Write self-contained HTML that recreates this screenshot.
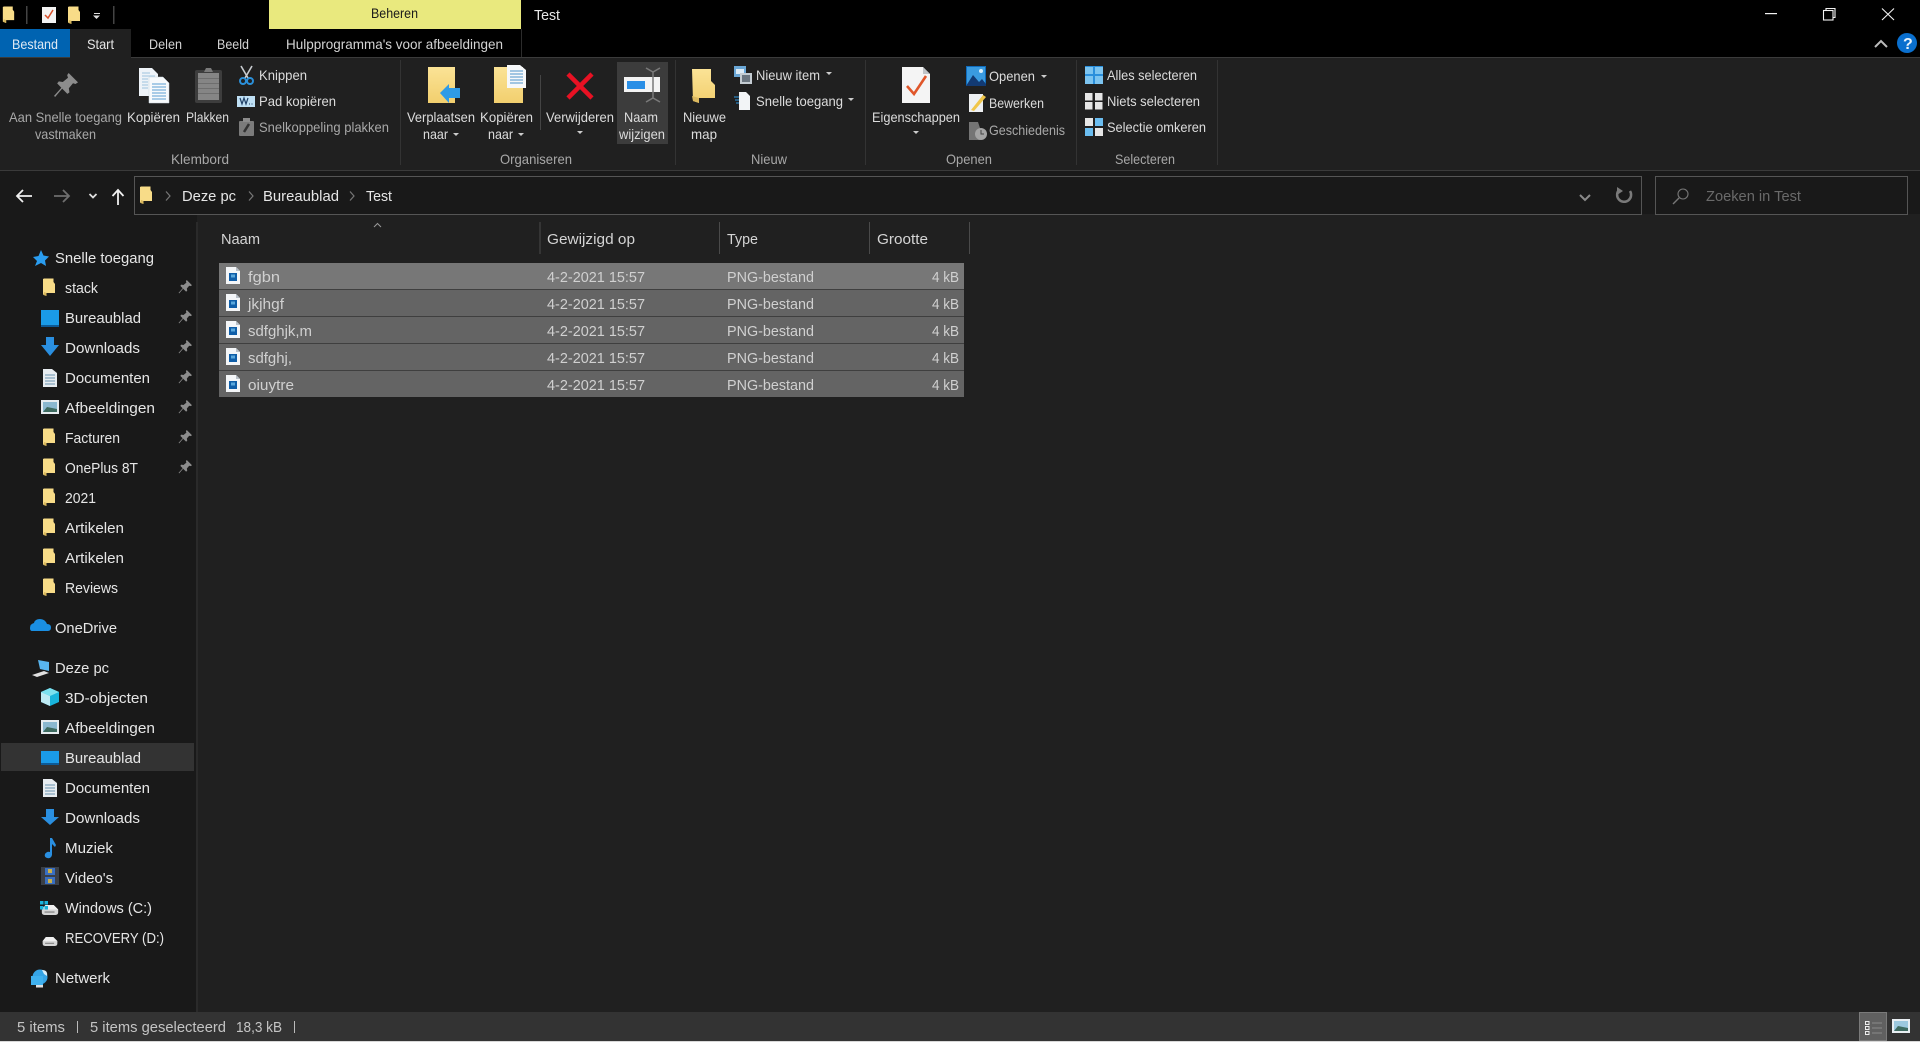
<!DOCTYPE html>
<html><head><meta charset="utf-8"><title>Test</title>
<style>
html,body{margin:0;padding:0;background:#191919;overflow:hidden}
svg{display:block}
text{font-family:"Liberation Sans",sans-serif;font-size:14.5px;fill:#d4d4d4}
.r text{fill:#dcdcdc}
.g text{fill:#a8a8a8}
.s text{fill:#e6e6e6}
.row text{fill:#d0d0d0}
</style></head><body>
<svg width="1920" height="1042" viewBox="0 0 1920 1042" xmlns="http://www.w3.org/2000/svg">
<defs>
<linearGradient id="fy" x1="0" y1="0" x2="0" y2="1"><stop offset="0" stop-color="#fbe396"/><stop offset="1" stop-color="#f2cf6e"/></linearGradient>
<linearGradient id="bl" x1="0" y1="0" x2="1" y2="1"><stop offset="0" stop-color="#45b4f5"/><stop offset="1" stop-color="#0f7fd6"/></linearGradient>
<symbol id="fo" viewBox="0 0 12 18"><path d="M1 .5H10.500V4L12 6V15H3.500V18L0 16.500V1Z" fill="#f8dc88"/><path d="M3.500 15V18L.5 17L1 14Z" fill="#d9b75c"/></symbol>
<symbol id="pin" viewBox="0 0 12 12"><path d="M7.500 0L12 4.500L10.800 5.300L9.600 4.900L7.600 7.300L7.900 9.300L6.900 10L4.400 7.500L1 11.500L.5 11L4 7.100L2 5L2.800 4L4.700 4.300L7.200 2.300L6.800 1Z" fill="#8c8c8c"/></symbol>
<symbol id="pic" viewBox="0 0 14 17"><path d="M0 0H10L14 4V17H0Z" fill="#f4f6f8"/><path d="M10 0V4H14Z" fill="#b8c0c8"/><rect x="3" y="6" width="8" height="8" fill="#0f5ea8"/><rect x="5" y="7.500" width="4" height="3" fill="#5aa8dc"/></symbol>
<symbol id="hd" viewBox="0 0 18 11"><path d="M4 0H13L18 5V8Q18 11 15 11H3Q0 11 0 8V5Z" fill="#d6d6d6"/><path d="M4 0H13L18 5H0Z" fill="#f0f0f0"/><rect x="3" y="7" width="11" height="1.500" fill="#8a8a8a"/></symbol>
</defs>

<!-- backgrounds -->
<rect width="1920" height="1042" fill="#191919"/>
<rect width="1920" height="57" fill="#000"/>
<rect y="57" width="1920" height="114" fill="#202020"/>
<rect y="57" width="1920" height="1" fill="#3b3b3b"/>
<rect y="170" width="1920" height="1" fill="#3a3a3a"/>
<rect x="197" y="214" width="1723" height="798" fill="#202020"/>
<rect x="196" y="222" width="2" height="790" fill="#2a2a2a"/>
<rect y="1012" width="1920" height="29" fill="#333"/>
<rect y="1041" width="1920" height="1" fill="#d8d8d8"/>

<!-- title bar -->
<rect x="269" width="252" height="29" fill="#e9e97e"/>
<rect x="0" y="29" width="70" height="28" fill="#0063b1"/>
<rect x="70" y="29" width="61" height="30" fill="#202020"/>
<rect x="521" y="29" width="1" height="28" fill="#2c2c2c"/>
<text x="371" y="18" textLength="47" lengthAdjust="spacingAndGlyphs" style="fill:#1a1a1a;font-size:13.500px">Beheren</text>
<text x="534" y="20" textLength="26" lengthAdjust="spacingAndGlyphs" style="fill:#e8e8e8">Test</text>
<g>
<text x="12" y="49" textLength="46" lengthAdjust="spacingAndGlyphs" style="fill:#dfe9f3;font-size:14px">Bestand</text>
<text x="87" y="49" textLength="27" lengthAdjust="spacingAndGlyphs" style="fill:#e6e6e6;font-size:14px">Start</text>
<text x="149" y="49" textLength="33" lengthAdjust="spacingAndGlyphs" style="font-size:14px">Delen</text>
<text x="217" y="49" textLength="32" lengthAdjust="spacingAndGlyphs" style="font-size:14px">Beeld</text>
<text x="286" y="49" textLength="217" lengthAdjust="spacingAndGlyphs" style="font-size:14px">Hulpprogramma's voor afbeeldingen</text>
</g>
<!-- quick access -->
<use href="#fo" x="2" y="6" width="13" height="17"/>
<rect x="26" y="6" width="1.500" height="18" fill="#444"/>
<rect x="42" y="7" width="14" height="16" fill="#f3f3f3"/>
<path d="M45 15L48 18L53 10" fill="none" stroke="#d8502a" stroke-width="1.500"/>
<use href="#fo" x="68" y="6" width="12" height="18"/>
<rect x="94" y="13" width="6" height="1" fill="#ddd"/>
<path d="M93 15.500H100L96.500 19Z" fill="#ddd"/>
<rect x="113" y="6" width="1.500" height="18" fill="#444"/>
<!-- window controls -->
<rect x="1765" y="13" width="12" height="1.200" fill="#f2f2f2"/>
<g fill="none" stroke="#f2f2f2" stroke-width="1.100"><rect x="1823.500" y="10.500" width="9.500" height="9.500"/><path d="M1826 10V8.500H1835V17.500H1833"/><path d="M1882 8.500L1894 20M1894 8.500L1882 20"/></g>
<path d="M1875 47L1881 41L1887 47" fill="none" stroke="#bbb" stroke-width="2"/>
<circle cx="1907" cy="43" r="10" fill="#0a6fce"/>
<text x="1903" y="49" style="font-size:16px;font-weight:bold;fill:#e8f2fb">?</text>

<!-- ribbon highlight + separators -->
<rect x="617" y="62" width="51" height="82" fill="#3c3c3c"/>
<g fill="#333"><rect x="400" y="60" width="1" height="105"/><rect x="675" y="60" width="1" height="105"/><rect x="865" y="60" width="1" height="105"/><rect x="1076" y="60" width="1" height="105"/><rect x="1217" y="60" width="1" height="105"/></g>
<rect x="540" y="75" width="1" height="55" fill="#444"/>

<!-- ribbon text -->
<g class="g">
<text x="9" y="122" textLength="113" lengthAdjust="spacingAndGlyphs" style="font-size:14px">Aan Snelle toegang</text>
<text x="35" y="139" textLength="61" lengthAdjust="spacingAndGlyphs" style="font-size:14px">vastmaken</text>
<text x="259" y="132" textLength="130" lengthAdjust="spacingAndGlyphs" style="font-size:14px">Snelkoppeling plakken</text>
<text x="989" y="135" textLength="76" lengthAdjust="spacingAndGlyphs" style="font-size:14px">Geschiedenis</text>
<text x="171" y="164" textLength="58" lengthAdjust="spacingAndGlyphs" style="font-size:14px">Klembord</text>
<text x="500" y="164" textLength="72" lengthAdjust="spacingAndGlyphs" style="font-size:14px">Organiseren</text>
<text x="751" y="164" textLength="36" lengthAdjust="spacingAndGlyphs" style="font-size:14px">Nieuw</text>
<text x="946" y="164" textLength="46" lengthAdjust="spacingAndGlyphs" style="font-size:14px">Openen</text>
<text x="1115" y="164" textLength="60" lengthAdjust="spacingAndGlyphs" style="font-size:14px">Selecteren</text>
</g>
<g class="r">
<text x="127" y="122" textLength="53" lengthAdjust="spacingAndGlyphs" style="font-size:14px">Kopiëren</text>
<text x="186" y="122" textLength="43" lengthAdjust="spacingAndGlyphs" style="font-size:14px">Plakken</text>
<text x="259" y="80" textLength="48" lengthAdjust="spacingAndGlyphs" style="font-size:14px">Knippen</text>
<text x="259" y="106" textLength="77" lengthAdjust="spacingAndGlyphs" style="font-size:14px">Pad kopiëren</text>
<text x="407" y="122" textLength="68" lengthAdjust="spacingAndGlyphs" style="font-size:14px">Verplaatsen</text>
<text x="423" y="139" textLength="25" lengthAdjust="spacingAndGlyphs" style="font-size:14px">naar</text>
<text x="480" y="122" textLength="53" lengthAdjust="spacingAndGlyphs" style="font-size:14px">Kopiëren</text>
<text x="488" y="139" textLength="25" lengthAdjust="spacingAndGlyphs" style="font-size:14px">naar</text>
<text x="546" y="122" textLength="68" lengthAdjust="spacingAndGlyphs" style="font-size:14px">Verwijderen</text>
<text x="624" y="122" textLength="34" lengthAdjust="spacingAndGlyphs" style="font-size:14px">Naam</text>
<text x="619" y="139" textLength="46" lengthAdjust="spacingAndGlyphs" style="font-size:14px">wijzigen</text>
<text x="683" y="122" textLength="43" lengthAdjust="spacingAndGlyphs" style="font-size:14px">Nieuwe</text>
<text x="691" y="139" textLength="26" lengthAdjust="spacingAndGlyphs" style="font-size:14px">map</text>
<text x="756" y="80" textLength="64" lengthAdjust="spacingAndGlyphs" style="font-size:14px">Nieuw item</text>
<text x="756" y="106" textLength="87" lengthAdjust="spacingAndGlyphs" style="font-size:14px">Snelle toegang</text>
<text x="872" y="122" textLength="88" lengthAdjust="spacingAndGlyphs" style="font-size:14px">Eigenschappen</text>
<text x="989" y="81" textLength="46" lengthAdjust="spacingAndGlyphs" style="font-size:14px">Openen</text>
<text x="989" y="108" textLength="55" lengthAdjust="spacingAndGlyphs" style="font-size:14px">Bewerken</text>
<text x="1107" y="80" textLength="90" lengthAdjust="spacingAndGlyphs" style="font-size:14px">Alles selecteren</text>
<text x="1107" y="106" textLength="93" lengthAdjust="spacingAndGlyphs" style="font-size:14px">Niets selecteren</text>
<text x="1107" y="132" textLength="99" lengthAdjust="spacingAndGlyphs" style="font-size:14px">Selectie omkeren</text>
</g>
<!-- dropdown carets -->
<g fill="#ccc">
<path d="M453 133H459L456 136Z"/><path d="M518 133H524L521 136Z"/><path d="M577 131H583L580 134Z"/>
<path d="M826 72H832L829 75Z"/><path d="M848 98H854L851 101Z"/><path d="M913 131H919L916 134Z"/><path d="M1041 75H1047L1044 78Z"/>
</g>

<!-- ribbon icons -->
<!-- pin -->
<use href="#pin" x="53" y="73" width="25" height="25"/>
<!-- copy docs -->
<path d="M139 68H152L158 74V96H139Z" fill="#eef3f8"/>
<g stroke="#9fc3de" stroke-width="1"><path d="M142 73H150M142 76H155M142 79H148M142 82H148M142 85H148M142 88H148"/></g>
<path d="M149 77H163L169 83V103H149Z" fill="#f7fafc" stroke="#c8d4dd" stroke-width=".5"/>
<g stroke="#5b9fd2" stroke-width="1"><path d="M152 84H166M152 87H166M152 90H166M152 93H166M152 96H166M152 99H166"/></g>
<!-- clipboard -->
<rect x="195" y="70" width="27" height="33" rx="2" fill="#3d3d3d"/>
<rect x="198" y="73" width="21" height="27" fill="#858585"/>
<g stroke="#6e6e6e"><path d="M198 78.500H219M198 83.500H219M198 88.500H219M198 93.500H219"/></g>
<path d="M204 72L206 68H211L213 72Z" fill="#7a7a7a"/>
<!-- scissors -->
<path d="M241 66L248 78M252 66L245 78" stroke="#c8ccd0" stroke-width="1.600" fill="none"/>
<g fill="none" stroke="#2b8fd8" stroke-width="2"><circle cx="243" cy="81" r="3"/><circle cx="250" cy="81" r="3"/></g>
<!-- path copy -->
<rect x="237" y="96" width="18" height="11" fill="#bfe0f5"/>
<g stroke="#1f3f66" stroke-width="1.200" fill="none"><path d="M240 98L242 104L244 98L246 104L248 98"/></g>
<path d="M249 104h1m1.500 0h1" stroke="#1f3f66"/>
<!-- paste shortcut -->
<rect x="239" y="121" width="15" height="15" rx="1" fill="#7b7b7b"/>
<rect x="243" y="118" width="7" height="4" fill="#8c8c8c"/>
<path d="M244 132L249 124" stroke="#333" stroke-width="2.500"/>
<!-- move folder -->
<path d="M428 67H455V103H428Z" fill="url(#fy)"/>
<path d="M449 84L440 93L449 103V98H460V88H449Z" fill="#2e9be6"/>
<!-- copy folder -->
<path d="M494 67H523V103H494Z" fill="url(#fy)"/>
<path d="M507 65H520L526 70V88H507Z" fill="#f6f8fa"/>
<g stroke="#4f93c9"><path d="M510 71H523M510 74H523M510 77H523M510 80H523M510 83H523"/></g>
<!-- delete X -->
<path d="M568 74L592 98M592 74L568 98" stroke="#e81123" stroke-width="4.500" fill="none"/>
<!-- rename -->
<rect x="624" y="77" width="36" height="15" fill="#f4f4f4"/>
<rect x="627" y="81" width="18" height="8" fill="#2a8fe6"/>
<path d="M646 68L653 72L660 68M653 72V98M646 102L653 98L660 102" stroke="#7a7a7a" stroke-width="1.500" fill="none"/>
<!-- new folder -->
<path d="M692 69H711V81L715 85V98H699V103L693 101Z" fill="url(#fy)"/>
<path d="M699 98V103L693 101L692 96Z" fill="#dcb95f"/>
<!-- new item -->
<rect x="734" y="66" width="12" height="11" fill="#6aa7d6"/><rect x="736" y="69" width="8" height="5" fill="#dcebf6"/>
<rect x="740" y="73" width="12" height="11" fill="#c4ccd2"/><rect x="742" y="75" width="8" height="7" fill="#6b7680"/>
<!-- easy access -->
<path d="M739 92H746L750 96V110H739Z" fill="#f2f4f6"/>
<path d="M734 97H739M735 100H739M736 103H739" stroke="#2e9be6"/>
<!-- properties -->
<path d="M902 67H923L930 74V103H902Z" fill="#f4f4f4"/><path d="M923 67V74H930Z" fill="#bfc4c8"/>
<path d="M907 86L914 94L926 76" fill="none" stroke="#e0562a" stroke-width="2.600"/>
<!-- open photo -->
<rect x="966" y="66" width="20" height="20" fill="#0f6cbd"/>
<rect x="967" y="67" width="18" height="18" fill="#3a9be0"/>
<path d="M966 86L973 75L979 82L982 79L986 84V86Z" fill="#123a73"/><circle cx="981" cy="71" r="2" fill="#d8eefb"/>
<!-- edit -->
<rect x="969" y="94" width="14" height="18" fill="#eef0f2"/>
<path d="M971 110L983 95L986 97L974 111Z" fill="#f0c64a"/>
<!-- history -->
<path d="M969 122H978L980 128V140H969Z" fill="#757575"/>
<circle cx="981" cy="134" r="6" fill="#a4a4a4"/><path d="M981 130V134H984" stroke="#444" fill="none"/>
<!-- select all -->
<g fill="#7cc4f0"><rect x="1085" y="66" width="8" height="8"/><rect x="1095" y="66" width="8" height="8"/><rect x="1085" y="76" width="8" height="8"/><rect x="1095" y="76" width="8" height="8"/></g>
<g fill="#2a8fdc"><path d="M1085 66h18v1h-18zM1085 74h18v2h-18zM1093 66h2v18h-2z"/></g>
<g fill="#e6e6e6"><rect x="1085" y="93" width="7.500" height="7.500"/><rect x="1095" y="93" width="7.500" height="7.500"/><rect x="1085" y="102" width="7.500" height="7.500"/><rect x="1095" y="102" width="7.500" height="7.500"/></g>
<rect x="1085" y="118" width="8" height="8" fill="#e6e6e6"/><rect x="1095" y="118" width="8" height="8" fill="#6bbdf0"/><rect x="1085" y="128" width="8" height="8" fill="#6bbdf0"/><rect x="1095" y="128" width="8" height="8" fill="#e6e6e6"/>

<!-- address row -->
<rect x="134.500" y="176.500" width="1507" height="38" fill="#191919" stroke="#555"/>
<rect x="1655.500" y="176.500" width="252" height="38" fill="#191919" stroke="#555"/>
<g fill="none" stroke-width="1.800">
<path d="M32 196H17M23 190L17 196L23 202" stroke="#f0f0f0"/>
<path d="M54 196H69M63 190L69 196L63 202" stroke="#6e6e6e"/>
<path d="M89.500 194L93 197.500L96.500 194" stroke="#e0e0e0"/>
<path d="M118 205V191M112.500 196L118 190L123.500 196" stroke="#f0f0f0"/>
<path d="M166 191.500L170 196L166 200.500" stroke="#777" stroke-width="1.200"/>
<path d="M249 191.500L253 196L249 200.500" stroke="#777" stroke-width="1.200"/>
<path d="M350 191.500L354 196L350 200.500" stroke="#777" stroke-width="1.200"/>
<path d="M1580 195L1585 200L1590 195" stroke="#8a8a8a" stroke-width="2"/>
<path d="M1619 190A7 7 0 1 0 1630 191" stroke="#7a7a7a" stroke-width="2.500"/>
</g>
<path d="M1617 187L1623 191L1617 195Z" fill="#7a7a7a"/>
<use href="#fo" x="140" y="186" width="12" height="18"/>
<g class="s">
<text x="182" y="201" textLength="54" lengthAdjust="spacingAndGlyphs">Deze pc</text>
<text x="263" y="201" textLength="76" lengthAdjust="spacingAndGlyphs">Bureaublad</text>
<text x="366" y="201" textLength="26" lengthAdjust="spacingAndGlyphs">Test</text>
</g>
<circle cx="1683" cy="194" r="5" fill="none" stroke="#777" stroke-width="1.100"/><path d="M1679 198L1673 204" stroke="#777" stroke-width="1.400"/>
<text x="1706" y="201" textLength="95" lengthAdjust="spacingAndGlyphs" style="fill:#6a6a6a">Zoeken in Test</text>

<!-- column headers -->
<path d="M374 227L377.500 223.500L381 227" fill="none" stroke="#999"/>
<g fill="#4a4a4a"><rect x="539.500" y="222" width="1" height="32"/><rect x="719" y="222" width="1" height="32"/><rect x="869" y="222" width="1" height="32"/><rect x="969" y="222" width="1" height="32"/></g>
<g>
<text x="221" y="244" textLength="39" lengthAdjust="spacingAndGlyphs">Naam</text>
<text x="547" y="244" textLength="88" lengthAdjust="spacingAndGlyphs">Gewijzigd op</text>
<text x="727" y="244" textLength="31" lengthAdjust="spacingAndGlyphs">Type</text>
<text x="877" y="244" textLength="51" lengthAdjust="spacingAndGlyphs">Grootte</text>
</g>

<!-- rows -->
<rect x="219" y="263" width="745" height="26" fill="#777"/>
<rect x="219" y="290" width="745" height="26" fill="#646464"/>
<rect x="219" y="317" width="745" height="26" fill="#646464"/>
<rect x="219" y="344" width="745" height="26" fill="#646464"/>
<rect x="219" y="371" width="745" height="26" fill="#646464"/>
<g fill="#3f3f3f"><rect x="219" y="289" width="745" height="1"/><rect x="219" y="316" width="745" height="1"/><rect x="219" y="343" width="745" height="1"/><rect x="219" y="370" width="745" height="1"/></g>
<use href="#pic" x="226" y="267" width="14" height="17"/>
<use href="#pic" x="226" y="294" width="14" height="17"/>
<use href="#pic" x="226" y="321" width="14" height="17"/>
<use href="#pic" x="226" y="348" width="14" height="17"/>
<use href="#pic" x="226" y="375" width="14" height="17"/>
<g class="row">
<text x="248" y="282" textLength="32" lengthAdjust="spacingAndGlyphs">fgbn</text>
<text x="547" y="282" textLength="98" lengthAdjust="spacingAndGlyphs">4-2-2021 15:57</text>
<text x="727" y="282" textLength="87" lengthAdjust="spacingAndGlyphs">PNG-bestand</text>
<text x="932" y="282" textLength="27" lengthAdjust="spacingAndGlyphs">4 kB</text>
<text x="248" y="309" textLength="36" lengthAdjust="spacingAndGlyphs">jkjhgf</text>
<text x="547" y="309" textLength="98" lengthAdjust="spacingAndGlyphs">4-2-2021 15:57</text>
<text x="727" y="309" textLength="87" lengthAdjust="spacingAndGlyphs">PNG-bestand</text>
<text x="932" y="309" textLength="27" lengthAdjust="spacingAndGlyphs">4 kB</text>
<text x="248" y="336" textLength="64" lengthAdjust="spacingAndGlyphs">sdfghjk,m</text>
<text x="547" y="336" textLength="98" lengthAdjust="spacingAndGlyphs">4-2-2021 15:57</text>
<text x="727" y="336" textLength="87" lengthAdjust="spacingAndGlyphs">PNG-bestand</text>
<text x="932" y="336" textLength="27" lengthAdjust="spacingAndGlyphs">4 kB</text>
<text x="248" y="363" textLength="44" lengthAdjust="spacingAndGlyphs">sdfghj,</text>
<text x="547" y="363" textLength="98" lengthAdjust="spacingAndGlyphs">4-2-2021 15:57</text>
<text x="727" y="363" textLength="87" lengthAdjust="spacingAndGlyphs">PNG-bestand</text>
<text x="932" y="363" textLength="27" lengthAdjust="spacingAndGlyphs">4 kB</text>
<text x="248" y="390" textLength="46" lengthAdjust="spacingAndGlyphs">oiuytre</text>
<text x="547" y="390" textLength="98" lengthAdjust="spacingAndGlyphs">4-2-2021 15:57</text>
<text x="727" y="390" textLength="87" lengthAdjust="spacingAndGlyphs">PNG-bestand</text>
<text x="932" y="390" textLength="27" lengthAdjust="spacingAndGlyphs">4 kB</text>
</g>

<!-- sidebar -->
<rect x="1" y="743" width="193" height="28" fill="#333"/>
<g class="s">
<text x="55" y="263" textLength="99" lengthAdjust="spacingAndGlyphs">Snelle toegang</text>
<text x="65" y="293" textLength="33" lengthAdjust="spacingAndGlyphs">stack</text>
<text x="65" y="323" textLength="76" lengthAdjust="spacingAndGlyphs">Bureaublad</text>
<text x="65" y="353" textLength="75" lengthAdjust="spacingAndGlyphs">Downloads</text>
<text x="65" y="383" textLength="85" lengthAdjust="spacingAndGlyphs">Documenten</text>
<text x="65" y="413" textLength="90" lengthAdjust="spacingAndGlyphs">Afbeeldingen</text>
<text x="65" y="443" textLength="55" lengthAdjust="spacingAndGlyphs">Facturen</text>
<text x="65" y="473" textLength="73" lengthAdjust="spacingAndGlyphs">OnePlus 8T</text>
<text x="65" y="503" textLength="31" lengthAdjust="spacingAndGlyphs">2021</text>
<text x="65" y="533" textLength="59" lengthAdjust="spacingAndGlyphs">Artikelen</text>
<text x="65" y="563" textLength="59" lengthAdjust="spacingAndGlyphs">Artikelen</text>
<text x="65" y="593" textLength="53" lengthAdjust="spacingAndGlyphs">Reviews</text>
<text x="55" y="633" textLength="62" lengthAdjust="spacingAndGlyphs">OneDrive</text>
<text x="55" y="673" textLength="54" lengthAdjust="spacingAndGlyphs">Deze pc</text>
<text x="65" y="703" textLength="83" lengthAdjust="spacingAndGlyphs">3D-objecten</text>
<text x="65" y="733" textLength="90" lengthAdjust="spacingAndGlyphs">Afbeeldingen</text>
<text x="65" y="763" textLength="76" lengthAdjust="spacingAndGlyphs">Bureaublad</text>
<text x="65" y="793" textLength="85" lengthAdjust="spacingAndGlyphs">Documenten</text>
<text x="65" y="823" textLength="75" lengthAdjust="spacingAndGlyphs">Downloads</text>
<text x="65" y="853" textLength="48" lengthAdjust="spacingAndGlyphs">Muziek</text>
<text x="65" y="883" textLength="48" lengthAdjust="spacingAndGlyphs">Video's</text>
<text x="65" y="913" textLength="87" lengthAdjust="spacingAndGlyphs">Windows (C:)</text>
<text x="65" y="943" textLength="99" lengthAdjust="spacingAndGlyphs">RECOVERY (D:)</text>
<text x="55" y="983" textLength="55" lengthAdjust="spacingAndGlyphs">Netwerk</text>
</g>
<!-- pins -->
<use href="#pin" x="178" y="280" width="14" height="14"/>
<use href="#pin" x="178" y="310" width="14" height="14"/>
<use href="#pin" x="178" y="340" width="14" height="14"/>
<use href="#pin" x="178" y="370" width="14" height="14"/>
<use href="#pin" x="178" y="400" width="14" height="14"/>
<use href="#pin" x="178" y="430" width="14" height="14"/>
<use href="#pin" x="178" y="460" width="14" height="14"/>
<!-- folders -->
<use href="#fo" x="43" y="278" width="12" height="18"/>
<use href="#fo" x="43" y="428" width="12" height="18"/>
<use href="#fo" x="43" y="458" width="12" height="18"/>
<use href="#fo" x="43" y="488" width="12" height="18"/>
<use href="#fo" x="43" y="518" width="12" height="18"/>
<use href="#fo" x="43" y="548" width="12" height="18"/>
<use href="#fo" x="43" y="578" width="12" height="18"/>
<!-- star -->
<path d="M41 250L43.500 255.500L49 256.500L45 260.500L46 266L41 263L35 266L37 261L33 257L38.500 256Z" fill="#2a9df0"/>
<!-- desktop icons -->
<rect x="41" y="310" width="18" height="15" fill="#1a9be8"/><rect x="41" y="325" width="18" height="2" fill="#0d5a96"/>
<rect x="41" y="751" width="18" height="14" fill="#1a9be8"/><rect x="41" y="763" width="18" height="2" fill="#0d5a96"/>
<!-- downloads -->
<path d="M46 337H54V345H59L50 356L41 345H46Z" fill="#2a8fe0"/>
<path d="M46 809H54V817H59L50 825L41 817H46Z" fill="#2a8fe0"/>
<!-- documents -->
<path d="M43 369H52L57 373V387H43Z" fill="#e8edf1"/><g stroke="#6a92b0"><path d="M45 375H55M45 378H55M45 381H55M45 384H55"/></g>
<path d="M43 779H52L57 783V797H43Z" fill="#e8edf1"/><g stroke="#6a92b0"><path d="M45 785H55M45 788H55M45 791H55M45 794H55"/></g>
<!-- pictures -->
<rect x="41" y="400" width="18" height="14" fill="#e6ecf0"/><rect x="43" y="402" width="14" height="10" fill="#8ab8d0"/><path d="M43 412L47 407L57 409V412Z" fill="#3e6b60"/>
<rect x="41" y="720" width="18" height="14" fill="#e6ecf0"/><rect x="43" y="722" width="14" height="10" fill="#8ab8d0"/><path d="M43 732L47 727L57 729V732Z" fill="#3e6b60"/>
<!-- onedrive -->
<path d="M32 631H48Q51 631 51 627.500Q51 624 47 624Q45 619 40 619Q35 619 34 623Q30 624 30 628Q30 631 32 631Z" fill="#1a8fe3"/>
<!-- deze pc -->
<path d="M38 660L49 662V671L40 669Z" fill="#58b4ee"/><path d="M32 675L44 671L49 673L37 677Z" fill="#e0e0e0"/>
<!-- 3d -->
<path d="M50 688L59 692V702L50 706L41 702V692Z" fill="#19b4dc"/><path d="M41 692L50 696V706L41 702Z" fill="#bdeaf3"/><path d="M41 692L50 688L59 692L50 696Z" fill="#7ce0ee"/>
<!-- music -->
<path d="M50 838H52L56 845L55 847L52 844V855Q51 859 47 858Q44 857 45 854Q47 851 50 852Z" fill="#2a8fe0"/>
<!-- video -->
<rect x="41" y="867" width="18" height="18" fill="#3a3f46"/><rect x="45" y="868" width="10" height="7" fill="#3a6fc0"/><rect x="45" y="877" width="10" height="7" fill="#3a6fc0"/><rect x="48" y="869" width="4" height="4" fill="#c9b04a"/><rect x="48" y="879" width="4" height="4" fill="#c9b04a"/>
<!-- drives -->
<use href="#hd" x="41" y="905" width="18" height="10"/>
<g fill="#19b4dc"><rect x="40" y="901" width="3.500" height="3.500"/><rect x="44.500" y="901" width="3.500" height="3.500"/><rect x="40" y="906" width="3.500" height="3.500"/><rect x="44.500" y="906" width="3.500" height="3.500"/></g>
<use href="#hd" x="41" y="937" width="18" height="9"/>
<!-- network -->
<circle cx="40" cy="977" r="7.500" fill="#35a4e6"/><path d="M42 970Q48 970 47 976L44 974Z" fill="#d9eef9"/><rect x="31" y="976" width="12" height="9" fill="#3fb0ee"/><rect x="36" y="985" width="7" height="2.500" fill="#ddd"/>

<!-- status bar -->
<g>
<text x="17" y="1032" textLength="48" lengthAdjust="spacingAndGlyphs" style="fill:#c4c4c4">5 items</text>
<text x="90" y="1032" textLength="136" lengthAdjust="spacingAndGlyphs" style="fill:#c4c4c4">5 items geselecteerd</text>
<text x="236" y="1032" textLength="46" lengthAdjust="spacingAndGlyphs" style="fill:#c4c4c4">18,3 kB</text>
</g>
<rect x="77" y="1021" width="1" height="12" fill="#bbb"/>
<rect x="294" y="1021" width="1" height="12" fill="#bbb"/>
<rect x="1859.500" y="1012.500" width="27" height="28" fill="#606060" stroke="#7a7a7a"/>
<g fill="none" stroke="#eee"><rect x="1865.500" y="1021.500" width="3.500" height="3"/><rect x="1865.500" y="1026.500" width="3.500" height="3"/><rect x="1865.500" y="1031.500" width="3.500" height="3"/></g>
<g stroke="#8a8a8a"><path d="M1872 1023H1882M1872 1028H1882M1872 1033H1882"/></g>
<rect x="1892" y="1019" width="18" height="14" fill="#e8eef2"/><rect x="1894" y="1021" width="14" height="10" fill="#9cc8de"/><path d="M1894 1031L1898 1026L1908 1028V1031Z" fill="#3e6b60"/>
</svg>
</body></html>
